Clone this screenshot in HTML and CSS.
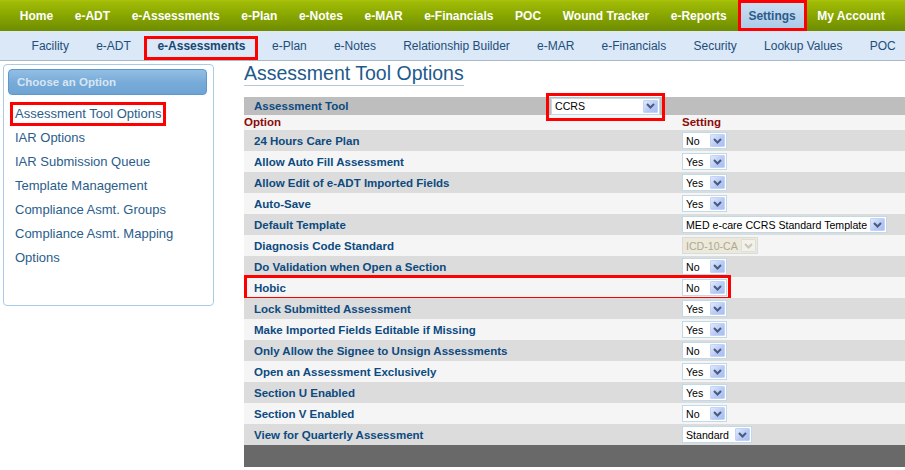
FILE: index.html
```html
<!DOCTYPE html>
<html>
<head>
<meta charset="utf-8">
<title>Assessment Tool Options</title>
<link rel="stylesheet" href="styles.css">
</head>
<body>
<nav class="topnav">
  <a class="tn">Home</a>
  <a class="tn">e-ADT</a>
  <a class="tn">e-Assessments</a>
  <a class="tn">e-Plan</a>
  <a class="tn">e-Notes</a>
  <a class="tn">e-MAR</a>
  <a class="tn">e-Financials</a>
  <a class="tn">POC</a>
  <a class="tn">Wound Tracker</a>
  <a class="tn">e-Reports</a>
  <a class="tn tn-active mark">Settings</a>
  <a class="tn">My Account</a>
</nav>
<nav class="subnav">
  <a class="sn">Facility</a>
  <a class="sn">e-ADT</a>
  <a class="sn sn-active mark">e-Assessments</a>
  <a class="sn">e-Plan</a>
  <a class="sn">e-Notes</a>
  <a class="sn">Relationship Builder</a>
  <a class="sn">e-MAR</a>
  <a class="sn">e-Financials</a>
  <a class="sn">Security</a>
  <a class="sn">Lookup Values</a>
  <a class="sn">POC</a>
</nav>
<div class="page">
  <aside class="side">
    <div class="side-head">Choose an Option</div>
    <ul class="side-list">
      <li><a class="side-link side-link-active">Assessment Tool Options</a></li>
      <li><a class="side-link">IAR Options</a></li>
      <li><a class="side-link">IAR Submission Queue</a></li>
      <li><a class="side-link">Template Management</a></li>
      <li><a class="side-link">Compliance Asmt. Groups</a></li>
      <li><a class="side-link">Compliance Asmt. Mapping</a></li>
      <li><a class="side-link">Options</a></li>
    </ul>
  </aside>
  <main class="main">
    <h1 class="title">Assessment Tool Options</h1>
    <div class="grid">
      <div class="hrow">
        <div class="lbl">Assessment Tool</div>
        <div class="cell"><span class="sel w-ccrs"><span class="txt">CCRS</span><span class="btn"><svg width="9" height="6" viewBox="0 0 9 6"><path d="M1 1l3.5 3.5L8 1" fill="none" stroke="#4a5a7c" stroke-width="2"/></svg></span></span></div>
        <span class="box box-ccrs"></span>
      </div>
      <div class="orow"><div class="ohead">Option</div><div class="ohead">Setting</div></div>

      <div class="row dark"><div class="lbl">24 Hours Care Plan</div><div class="cell"><span class="sel w-yn"><span class="txt">No</span><span class="btn"><svg width="9" height="6" viewBox="0 0 9 6"><path d="M1 1l3.5 3.5L8 1" fill="none" stroke="#4a5a7c" stroke-width="2"/></svg></span></span></div></div>
      <div class="row light"><div class="lbl">Allow Auto Fill Assessment</div><div class="cell"><span class="sel w-yn"><span class="txt">Yes</span><span class="btn"><svg width="9" height="6" viewBox="0 0 9 6"><path d="M1 1l3.5 3.5L8 1" fill="none" stroke="#4a5a7c" stroke-width="2"/></svg></span></span></div></div>
      <div class="row dark"><div class="lbl">Allow Edit of e-ADT Imported Fields</div><div class="cell"><span class="sel w-yn"><span class="txt">Yes</span><span class="btn"><svg width="9" height="6" viewBox="0 0 9 6"><path d="M1 1l3.5 3.5L8 1" fill="none" stroke="#4a5a7c" stroke-width="2"/></svg></span></span></div></div>
      <div class="row light"><div class="lbl">Auto-Save</div><div class="cell"><span class="sel w-yn"><span class="txt">Yes</span><span class="btn"><svg width="9" height="6" viewBox="0 0 9 6"><path d="M1 1l3.5 3.5L8 1" fill="none" stroke="#4a5a7c" stroke-width="2"/></svg></span></span></div></div>
      <div class="row dark"><div class="lbl">Default Template</div><div class="cell"><span class="sel w-tpl"><span class="txt">MED e-care CCRS Standard Template</span><span class="btn"><svg width="9" height="6" viewBox="0 0 9 6"><path d="M1 1l3.5 3.5L8 1" fill="none" stroke="#4a5a7c" stroke-width="2"/></svg></span></span></div></div>
      <div class="row light"><div class="lbl">Diagnosis Code Standard</div><div class="cell"><span class="sel w-icd sel-off"><span class="txt">ICD-10-CA</span><span class="btn"><svg width="9" height="6" viewBox="0 0 9 6"><path d="M1 1l3.5 3.5L8 1" fill="none" stroke="#c9c7ba" stroke-width="2"/></svg></span></span></div></div>
      <div class="row dark"><div class="lbl">Do Validation when Open a Section</div><div class="cell"><span class="sel w-yn"><span class="txt">No</span><span class="btn"><svg width="9" height="6" viewBox="0 0 9 6"><path d="M1 1l3.5 3.5L8 1" fill="none" stroke="#4a5a7c" stroke-width="2"/></svg></span></span></div></div>
      <div class="row light"><div class="lbl">Hobic</div><div class="cell"><span class="sel w-yn"><span class="txt">No</span><span class="btn"><svg width="9" height="6" viewBox="0 0 9 6"><path d="M1 1l3.5 3.5L8 1" fill="none" stroke="#4a5a7c" stroke-width="2"/></svg></span></span></div><span class="box box-hobic"></span></div>
      <div class="row dark"><div class="lbl">Lock Submitted Assessment</div><div class="cell"><span class="sel w-yn"><span class="txt">Yes</span><span class="btn"><svg width="9" height="6" viewBox="0 0 9 6"><path d="M1 1l3.5 3.5L8 1" fill="none" stroke="#4a5a7c" stroke-width="2"/></svg></span></span></div></div>
      <div class="row light"><div class="lbl">Make Imported Fields Editable if Missing</div><div class="cell"><span class="sel w-yn"><span class="txt">Yes</span><span class="btn"><svg width="9" height="6" viewBox="0 0 9 6"><path d="M1 1l3.5 3.5L8 1" fill="none" stroke="#4a5a7c" stroke-width="2"/></svg></span></span></div></div>
      <div class="row dark"><div class="lbl">Only Allow the Signee to Unsign Assessments</div><div class="cell"><span class="sel w-yn"><span class="txt">No</span><span class="btn"><svg width="9" height="6" viewBox="0 0 9 6"><path d="M1 1l3.5 3.5L8 1" fill="none" stroke="#4a5a7c" stroke-width="2"/></svg></span></span></div></div>
      <div class="row light"><div class="lbl">Open an Assessment Exclusively</div><div class="cell"><span class="sel w-yn"><span class="txt">Yes</span><span class="btn"><svg width="9" height="6" viewBox="0 0 9 6"><path d="M1 1l3.5 3.5L8 1" fill="none" stroke="#4a5a7c" stroke-width="2"/></svg></span></span></div></div>
      <div class="row dark"><div class="lbl">Section U Enabled</div><div class="cell"><span class="sel w-yn"><span class="txt">Yes</span><span class="btn"><svg width="9" height="6" viewBox="0 0 9 6"><path d="M1 1l3.5 3.5L8 1" fill="none" stroke="#4a5a7c" stroke-width="2"/></svg></span></span></div></div>
      <div class="row light"><div class="lbl">Section V Enabled</div><div class="cell"><span class="sel w-yn"><span class="txt">No</span><span class="btn"><svg width="9" height="6" viewBox="0 0 9 6"><path d="M1 1l3.5 3.5L8 1" fill="none" stroke="#4a5a7c" stroke-width="2"/></svg></span></span></div></div>
      <div class="row dark"><div class="lbl">View for Quarterly Assessment</div><div class="cell"><span class="sel w-std"><span class="txt">Standard</span><span class="btn"><svg width="9" height="6" viewBox="0 0 9 6"><path d="M1 1l3.5 3.5L8 1" fill="none" stroke="#4a5a7c" stroke-width="2"/></svg></span></span></div></div>
      <div class="foot"></div>
    </div>
  </main>
</div>
</body>
</html>
```
FILE: styles.css
```css
* { box-sizing: border-box; }
html, body { margin: 0; padding: 0; background: #fff; }
body { font-family: "Liberation Sans", Arial, sans-serif; width: 905px; height: 470px; overflow: hidden; }
a { text-decoration: none; cursor: pointer; }

.topnav {
  display: flex;
  height: 31px;
  padding-left: 9px;
  background: linear-gradient(#aac40c 0, #a0bb06 6%, #88a600 50%, #6e8c00 100%);
}
.tn {
  display: block;
  padding: 2px 10.8px 0;
  line-height: 29px;
  font-size: 12px;
  font-weight: bold;
  color: #fff;
  white-space: nowrap;
}
.tn-active {
  background: linear-gradient(#cde2f4, #a9c8e6);
  color: #2d5c8a;
}
.mark { outline: 3px solid #f00; outline-offset: -3px; }

.subnav {
  display: flex;
  height: 30px;
  padding: 5px 0 0 18px;
  background: #dae8f7;
  border-bottom: 1px solid #aab8c6;
}
.sn {
  display: block;
  height: 24px;
  padding: 0 13.6px 3px;
  line-height: 21px;
  font-size: 12px;
  color: #1f4e79;
  white-space: nowrap;
}
.sn-active { font-weight: bold; color: #184672; padding: 0 13px 3px; }

.page { display: flex; padding-left: 3px; }

.side {
  width: 211px;
  height: 242px;
  margin-top: 3px;
  padding: 4px 6px 0 4px;
  border: 1px solid #a9cbe6;
  border-radius: 4px;
  background: #fff;
}
.side-head {
  height: 26px;
  line-height: 24px;
  padding-left: 8px;
  border: 1px solid #5f98cd;
  border-radius: 4px;
  background: linear-gradient(#92bee4, #77aad8 55%, #6ea4d4);
  color: #d6e6f4;
  font-size: 11.5px;
  font-weight: bold;
}
.side-list { list-style: none; margin: 7px 0 0 2px; padding: 0; }
.side-list li { height: 24px; }
.side-link {
  display: inline-block;
  height: 24px;
  line-height: 18px;
  padding: 0 2px;
  border: 3px solid transparent;
  font-size: 13px;
  color: #2a5d8b;
  white-space: nowrap;
}
.side-link-active { border-color: #f00; }

.main { flex: 1; margin-left: 30px; }
.title {
  display: inline-block;
  margin: 0;
  padding-top: 1px;
  line-height: 23px;
  font-size: 19.5px;
  font-weight: normal;
  color: #1d5a8c;
  border-bottom: 1px solid #b4c8d8;
  white-space: nowrap;
}
.grid { margin-top: 11px; }

.hrow {
  position: relative;
  display: grid;
  grid-template-columns: 307px 1fr;
  align-items: center;
  height: 18px;
  background: #bebebe;
}
.orow {
  display: grid;
  grid-template-columns: 438px 1fr;
  height: 15px;
  line-height: 15px;
  background: #f5f5f5;
}
.ohead { font-size: 11.5px; font-weight: bold; color: #8b0a0a; }

.row {
  position: relative;
  display: grid;
  grid-template-columns: 438px 1fr;
  align-items: center;
  height: 21px;
}
.dark { background: #dcdcdc; }
.light { background: #f5f5f5; }
.lbl {
  padding-left: 10px;
  font-size: 11.5px;
  font-weight: bold;
  color: #0c4a80;
  white-space: nowrap;
}
.cell { display: flex; align-items: center; }

.sel {
  display: inline-flex;
  align-items: center;
  height: 17px;
  padding: 0 1px 0 3px;
  border: 1px solid #c0dbe8;
  background: #fff;
  font-size: 10.6px;
  color: #000;
  white-space: nowrap;
}
.sel .txt { flex: 1; }
.sel .btn {
  display: flex;
  align-items: center;
  justify-content: center;
  width: 15px;
  height: 13px;
  border: 1px solid #c3d2f6;
  border-radius: 1px;
  background: linear-gradient(135deg, #e0e9fd, #b6c9f5 60%, #a9bff2);
}
.sel-off { background: #ece9d8; border-color: #d5dde0; color: #aca899; }
.sel-off .btn { background: #f2f1ea; border-color: #e0dfd6; }
.w-yn { width: 45px; }
.w-tpl { width: 205px; }
.w-icd { width: 76px; }
.w-std { width: 70px; }
.w-ccrs { width: 109px; height: 17px; }

.box { position: absolute; border: 3px solid #f00; pointer-events: none; }
.box-ccrs { left: 302px; top: -4px; width: 119px; height: 28px; }
.box-hobic { left: 0; top: -2px; width: 487px; height: 25px; }

.foot { height: 22px; background: #696969; }
```
